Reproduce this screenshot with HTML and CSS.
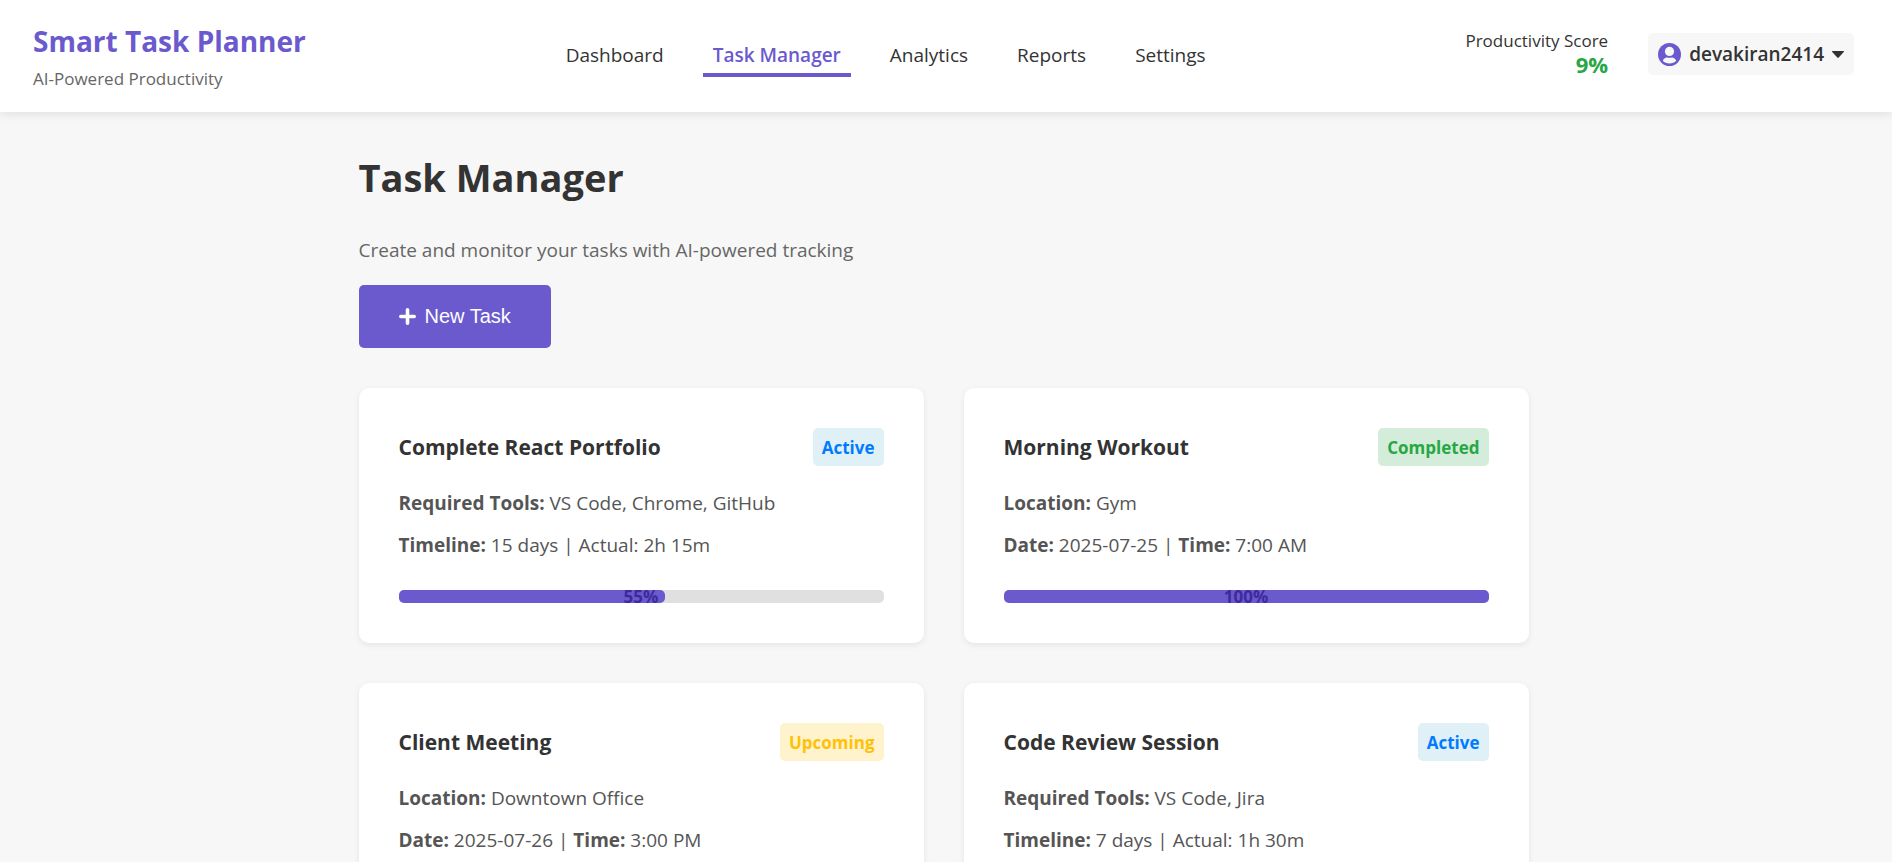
FILE: index.html
```html
<!DOCTYPE html>
<html lang="en">
<head>
<meta charset="utf-8">
<meta name="viewport" content="width=device-width, initial-scale=1">
<title>Smart Task Planner</title>
<link rel="stylesheet" href="styles.css">
</head>
<body>
<header class="topbar">
  <div class="brand">
    <div class="brand-name">Smart Task Planner</div>
    <div class="brand-tagline">AI-Powered Productivity</div>
  </div>
  <nav class="nav" aria-label="Main">
    <a class="nav-link" href="#dashboard">Dashboard</a>
    <a class="nav-link nav-link-active" href="#tasks" aria-current="page">Task Manager</a>
    <a class="nav-link" href="#analytics">Analytics</a>
    <a class="nav-link" href="#reports">Reports</a>
    <a class="nav-link" href="#settings">Settings</a>
  </nav>
  <div class="account">
    <div class="score">
      <div class="score-label">Productivity Score</div>
      <div class="score-value">9%</div>
    </div>
    <button class="user" type="button" aria-haspopup="true">
      <svg class="user-icon" viewBox="0 0 24 24" aria-hidden="true">
        <circle cx="12" cy="12" r="12" fill="#6a5acd"/>
        <circle cx="12" cy="8.800" r="4.800" fill="#f7f7f7"/>
        <path d="M5 18.600C5.600 16.400 7.600 15 9.500 15c.9.300 1.700.5 2.500.5s1.600-.2 2.500-.5c1.900 0 3.900 1.400 4.500 3.600C17.300 20.500 14.800 21.500 12 21.500S6.700 20.500 5 18.600z" fill="#f7f7f7"/>
      </svg>
      <span>devakiran2414</span>
      <svg class="user-caret" viewBox="0 0 12 7" aria-hidden="true"><path d="M.6 0h10.800c.6 0 .8.600.4 1L6.700 6.600c-.4.400-1 .4-1.400 0L.2 1C-.2.600 0 0 .6 0z" fill="#333"/></svg>
    </button>
  </div>
</header>

<main class="page">
  <h1 class="page-title">Task Manager</h1>
  <p class="page-subtitle">Create and monitor your tasks with AI-powered tracking</p>
  <button class="new-task" type="button">
    <svg class="plus" viewBox="0 0 17 17" aria-hidden="true"><path d="M8.500 1.800v13.400M1.800 8.500h13.400" stroke="#fff" stroke-width="3.600" stroke-linecap="round"/></svg>
    <span>New Task</span>
  </button>

  <section class="tasks" aria-label="Tasks">
    <article class="card">
      <div class="card-head">
        <h2 class="card-title">Complete React Portfolio</h2>
        <span class="badge badge-active">Active</span>
      </div>
      <p class="detail"><strong>Required Tools:</strong> VS Code, Chrome, GitHub</p>
      <p class="detail"><strong>Timeline:</strong> 15 days | Actual: 2h 15m</p>
      <div class="progress">
        <div class="progress-fill" style="width: 55%"></div>
        <span class="progress-text">55%</span>
      </div>
    </article>

    <article class="card">
      <div class="card-head">
        <h2 class="card-title">Morning Workout</h2>
        <span class="badge badge-completed">Completed</span>
      </div>
      <p class="detail"><strong>Location:</strong> Gym</p>
      <p class="detail"><strong>Date:</strong> 2025-07-25 | <strong>Time:</strong> 7:00 AM</p>
      <div class="progress">
        <div class="progress-fill" style="width: 100%"></div>
        <span class="progress-text">100%</span>
      </div>
    </article>

    <article class="card">
      <div class="card-head">
        <h2 class="card-title">Client Meeting</h2>
        <span class="badge badge-upcoming">Upcoming</span>
      </div>
      <p class="detail"><strong>Location:</strong> Downtown Office</p>
      <p class="detail"><strong>Date:</strong> 2025-07-26 | <strong>Time:</strong> 3:00 PM</p>
    </article>

    <article class="card">
      <div class="card-head">
        <h2 class="card-title">Code Review Session</h2>
        <span class="badge badge-active">Active</span>
      </div>
      <p class="detail"><strong>Required Tools:</strong> VS Code, Jira</p>
      <p class="detail"><strong>Timeline:</strong> 7 days | Actual: 1h 30m</p>
    </article>
  </section>
</main>
</body>
</html>
```
FILE: styles.css
```css
* {
  box-sizing: border-box;
}

html {
  overflow: hidden;
}

body {
  margin: 0;
  background: #f7f7f7;
  color: #333;
  font-family: "Segoe UI", "Open Sans", "Noto Sans", sans-serif;
  font-size: 19px;
  line-height: 27px;
}

h1,
h2,
p {
  margin: 0;
}

.topbar {
  display: flex;
  align-items: center;
  justify-content: space-between;
  padding: 21px 38px 21px 33px;
  background: #fff;
  box-shadow: 0 2px 10px rgba(0, 0, 0, 0.1);
}

.brand-name {
  margin-bottom: 6px;
  color: #6a5acd;
  font-size: 28px;
  font-weight: 700;
  line-height: 40px;
}

.brand-tagline {
  color: #666;
  font-size: 17px;
  line-height: 24px;
}

.nav {
  display: flex;
  gap: 29px;
}

.nav-link {
  padding: 7px 10px 4px;
  border-bottom: 4px solid transparent;
  color: #333;
  text-decoration: none;
}

.nav-link-active {
  border-bottom-color: #6a5acd;
  color: #6a5acd;
  font-weight: 600;
}

.account {
  display: flex;
  align-items: center;
  gap: 40px;
  margin-bottom: 4px;
}

.score {
  padding-bottom: 4px;
  text-align: right;
  line-height: 24px;
}

.score-label {
  font-size: 17px;
}

.score-value {
  color: #28a745;
  font-size: 22px;
  font-weight: 700;
  line-height: 22px;
}

.user {
  display: flex;
  align-items: center;
  gap: 8px;
  height: 42px;
  padding: 0 10px;
  border: 0;
  border-radius: 5px;
  background: #f7f7f7;
  color: #333;
  font-family: inherit;
  font-size: 19px;
  font-weight: 600;
}

.user-icon {
  width: 23px;
  height: 23px;
}

.user-caret {
  width: 12px;
  height: 7px;
}

.page {
  max-width: 1175px;
  margin: 0 auto;
  padding: 40px 5px 40px 0;
}

.page-title {
  margin-bottom: 33px;
  font-size: 38px;
  font-weight: 700;
  line-height: 50px;
}

.page-subtitle {
  margin-bottom: 20px;
  color: #666;
  line-height: 30px;
}

.new-task {
  display: flex;
  align-items: center;
  gap: 9px;
  height: 63px;
  padding: 0 40px;
  border: 0;
  border-radius: 5px;
  background: #6a5acd;
  color: #fff;
  font-family: Arial, "Liberation Sans", sans-serif;
  font-size: 20px;
}

.plus {
  width: 17px;
  height: 17px;
}

.tasks {
  display: grid;
  grid-template-columns: 1fr 1fr;
  gap: 40px;
  margin-top: 40px;
}

.card {
  padding: 40px;
  border-radius: 10px;
  background: #fff;
  box-shadow: 0 2px 6px rgba(0, 0, 0, 0.08);
}

.card-head {
  display: flex;
  align-items: center;
  justify-content: space-between;
  margin-bottom: 24px;
}

.card-title {
  font-size: 21px;
  font-weight: 700;
  line-height: 30px;
}

.badge {
  padding: 8px 9px 6px;
  border-radius: 5px;
  font-size: 17px;
  font-weight: 700;
  line-height: 24px;
}

.badge-active {
  background: #e0f0f7;
  color: #007bff;
}

.badge-completed {
  background: #d4edda;
  color: #28a745;
}

.badge-upcoming {
  background: #fff3cd;
  color: #ffc107;
}

.detail {
  margin-bottom: 15px;
  color: #555;
}

.progress {
  position: relative;
  height: 13px;
  margin-top: 31px;
  border-radius: 5px;
  background: #e0e0e0;
}

.progress-fill {
  height: 100%;
  border-radius: 5px;
  background: #6a5acd;
}

.progress-text {
  position: absolute;
  inset: 0;
  color: #3d2a9e;
  font-size: 17px;
  font-weight: 700;
  line-height: 13px;
  text-align: center;
}
```
